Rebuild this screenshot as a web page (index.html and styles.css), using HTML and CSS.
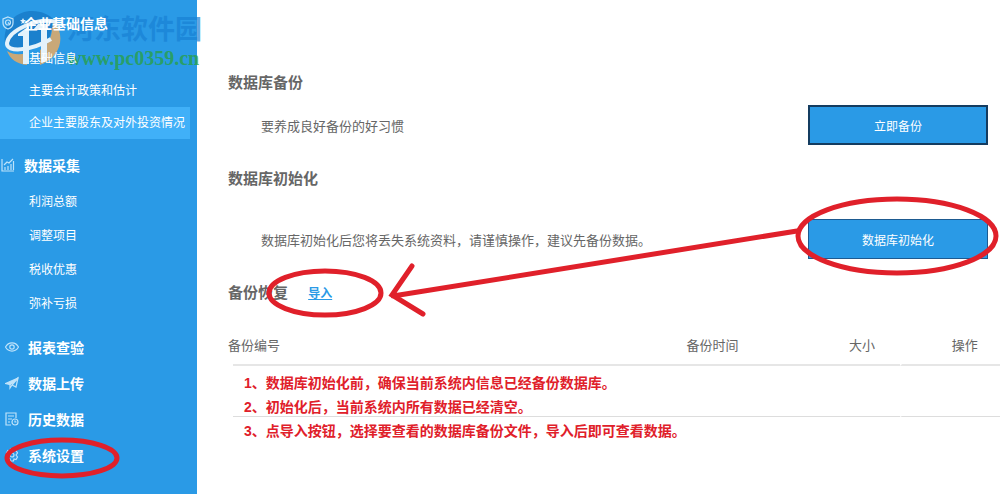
FILE: index.html
```html
<!DOCTYPE html>
<html lang="zh-CN">
<head>
    <meta charset="UTF-8">
    <meta name="viewport" content="width=device-width, initial-scale=1.0">
    <title>系统设置</title>
    <link rel="stylesheet" href="styles.css">
</head>
<body>
<div class="layout">
    <nav class="sidebar">
        <div class="group">
            <a class="head open" href="#">
                <svg class="icon" viewBox="0 0 14 14"><path d="M7 1l5 2v4c0 3-2 5-5 6-3-1-5-3-5-6V3z"/><circle cx="7" cy="6.500" r="2.500"/><path d="M7 6.500l2 2"/></svg>
                企业基础信息
            </a>
            <ul class="sub">
                <li><a href="#">基础信息</a></li>
                <li><a href="#">主要会计政策和估计</a></li>
                <li><a class="active" href="#">企业主要股东及对外投资情况</a></li>
            </ul>
        </div>
        <div class="group">
            <a class="head open" href="#">
                <svg class="icon" viewBox="0 0 14 14"><path d="M1 1v12h12M4 12V9M7 12V8M10 12V6M12.500 12V3M3 7l3-3 2 1 4-4"/></svg>
                数据采集
            </a>
            <ul class="sub wide">
                <li><a href="#">利润总额</a></li>
                <li><a href="#">调整项目</a></li>
                <li><a href="#">税收优惠</a></li>
                <li><a href="#">弥补亏损</a></li>
            </ul>
        </div>
        <a class="head" href="#">
            <svg class="icon" viewBox="0 0 14 14"><path d="M.5 7c3-5.500 10-5.500 13 0-3 5.500-10 5.500-13 0z"/><circle cx="7" cy="7" r="2.200"/></svg>
            报表查验
        </a>
        <a class="head" href="#">
            <svg class="icon" viewBox="0 0 14 14"><path class="solid" d="M.5 7.500L13 2 5 8.500z"/><path d="M13 2l-2 9-4-2-2 3V8.500zM13 2L7 9"/></svg>
            数据上传
        </a>
        <a class="head" href="#">
            <svg class="icon" viewBox="0 0 14 14"><path d="M6 13H1V1h10v5M3 4h6M3 7h4M3 10h2"/><circle cx="10" cy="10" r="3"/><path d="M10 8.500V10h1.500"/></svg>
            历史数据
        </a>
        <a class="head" href="#">
            <svg class="icon" viewBox="0 0 14 14"><path d="M5.500 1h3l.5 2 2-.5 1.500 2.500L11 7l1.500 2L11 11.500 9 11l-.5 2h-3L5 11l-2 .5L1.500 9 3 7 1.500 5 3 2.500 5 3z"/><circle cx="7" cy="7" r="2"/></svg>
            系统设置
        </a>
    </nav>

    <main class="content">
        <section>
            <h2>数据库备份</h2>
            <div class="row">
                <p>要养成良好备份的好习惯</p>
                <button class="btn focus" type="button">立即备份</button>
            </div>
        </section>
        <section class="init">
            <h2>数据库初始化</h2>
            <div class="row">
                <p>数据库初始化后您将丢失系统资料，请谨慎操作，建议先备份数据。</p>
                <button class="btn" type="button">数据库初始化</button>
            </div>
        </section>
        <section class="restore">
            <h2>备份恢复 <a class="import" href="#">导入</a></h2>
            <table>
                <thead>
                    <tr>
                        <th class="no">备份编号</th>
                        <th class="time">备份时间</th>
                        <th class="size">大小</th>
                        <th class="action">操作</th>
                    </tr>
                </thead>
                <tbody>
                    <tr>
                        <td></td>
                        <td></td>
                        <td></td>
                        <td class="action"></td>
                    </tr>
                </tbody>
            </table>
            <div class="notes">
                <p>1、数据库初始化前，确保当前系统内信息已经备份数据库。</p>
                <p>2、初始化后，当前系统内所有数据已经清空。</p>
                <p>3、点导入按钮，选择要查看的数据库备份文件，导入后即可查看数据。</p>
            </div>
        </section>
    </main>

    <div class="watermark">
        <svg class="logo" viewBox="0 0 60 58">
            <path class="blue" d="M1 34C-2 14 12 1 28 1c10 0 18 4 22 9l-6 24-28 8z"/>
            <path class="orange" d="M50 11c12 15 7 36-14 44V40c7-4 12-12 12-22zM3 41c6 4 13 4 20 2v12C13 54 6 49 3 41z"/>
            <path class="bar" d="M14 24l11-8v38h-6V26h-5zM29 20l5-6h9v36l-6 3V20z"/>
            <path class="swoosh" d="M52 12C34 7 5 20 3 33c-1 10 24 8 44-4"/>
            <path class="bar" d="M19 8l1 2h2l-2 2 1 2-2-1-2 1 1-2-2-2h2z"/>
        </svg>
        <div class="mark">
            <div class="name">河东软件园</div>
            <div class="site">www.pc0359.cn</div>
        </div>
    </div>

    <svg class="marker" viewBox="0 0 1000 494">
        <ellipse cx="897" cy="236" rx="99" ry="37"/>
        <ellipse cx="325" cy="293" rx="56" ry="22"/>
        <ellipse cx="62" cy="458" rx="55" ry="18"/>
        <path d="M797 231L393 296M412 266L392 295L423 314"/>
    </svg>
</div>
</body>
</html>
```

FILE: styles.css
```css
* {
    box-sizing: border-box;
}
body {
    font-family: "Liberation Sans", "Noto Sans CJK SC", sans-serif;
    font-size: 13px;
    color: #666;
    background-color: #fff;
    margin: 0;
}
h2, p, ul {
    margin: 0;
    padding: 0;
}
.layout {
    position: relative;
    display: flex;
    min-height: 100vh;
}
.sidebar {
    width: 197px;
    flex-shrink: 0;
    padding-top: 5px;
    background-color: #2a9ae6;
}
.sidebar a {
    color: #fff;
    text-decoration: none;
}
.group {
    position: relative;
    z-index: 1;
    margin-bottom: 8px;
}
.head {
    display: flex;
    align-items: center;
    gap: 9px;
    height: 36px;
    padding-left: 5px;
    font-size: 14px;
    font-weight: bold;
}
.head.open {
    padding-left: 1px;
}
.icon {
    width: 14px;
    height: 14px;
    fill: none;
    stroke: #bfe3fa;
    stroke-width: 1.2;
}
.solid {
    fill: #bfe3fa;
}
.sub {
    list-style: none;
    padding-top: 2px;
}
.sub a {
    display: block;
    margin-right: 7px;
    padding-left: 29px;
    font-size: 12px;
    line-height: 32px;
}
.sub.wide a {
    line-height: 34px;
}
.sub .active {
    background-color: #40b0f8;
}
.content {
    flex: 1;
    padding: 71px 0 0 31px;
}
section {
    margin-bottom: 22px;
}
h2 {
    font-size: 15px;
    line-height: 24px;
    margin-bottom: 10px;
}
.init h2 {
    margin-bottom: 28px;
}
.row {
    display: flex;
    align-items: center;
    justify-content: space-between;
    padding: 0 12px 0 33px;
}
.btn {
    width: 180px;
    height: 40px;
    border: 1px solid #1d5a90;
    background-color: #2a9ae6;
    color: #fff;
    font-family: inherit;
    font-size: 12px;
}
.btn.focus {
    border: 2px solid #143c60;
}
.restore {
    position: relative;
    margin-bottom: 0;
}
.restore h2 {
    margin-bottom: 20px;
}
.import {
    margin-left: 16px;
    font-size: 12px;
    color: #2a9ae6;
}
table {
    width: calc(100% - 5px);
    margin-left: 5px;
    border-spacing: 0;
    table-layout: fixed;
}
th {
    height: 40px;
    padding: 0 0 2px;
    font-weight: normal;
    border-bottom: 2px solid #e6e6e6;
}
td {
    height: 51px;
    padding: 0;
    border-bottom: 1px solid #ddd;
}
.no {
    text-align: left;
    text-indent: -5px;
}
.time {
    width: 29%;
}
.size {
    width: 10%;
}
th.action {
    width: 13%;
    padding-left: 27px;
}
.action {
    border-left: 2px solid #fff;
}
/* red hints lie over the table */
.notes {
    position: absolute;
    top: 90px;
    left: 16px;
    font-size: 14px;
    font-weight: bold;
    line-height: 24px;
    color: #e0202a;
}
.watermark {
    position: absolute;
    top: 10px;
    left: 4px;
    display: flex;
    gap: 3px;
}
.logo {
    width: 60px;
    height: 58px;
}
.blue {
    fill: #1b80cd;
}
.orange {
    fill: #c9a878;
}
.bar {
    fill: #e4f2fb;
}
.swoosh {
    fill: none;
    stroke: #e4f2fb;
    stroke-width: 4;
}
.name {
    font-size: 27px;
    font-weight: bold;
    line-height: 40px;
    color: rgba(24, 128, 212, 0.7);
}
.site {
    font-family: "Liberation Serif", serif;
    font-size: 20px;
    font-weight: bold;
    line-height: 16px;
    color: rgba(40, 160, 70, 0.8);
}
.marker {
    position: absolute;
    z-index: 2;
    top: 0;
    left: 0;
    width: 100%;
    fill: none;
    stroke: #e0202a;
    stroke-width: 5;
    stroke-linecap: round;
    pointer-events: none;
}
```
